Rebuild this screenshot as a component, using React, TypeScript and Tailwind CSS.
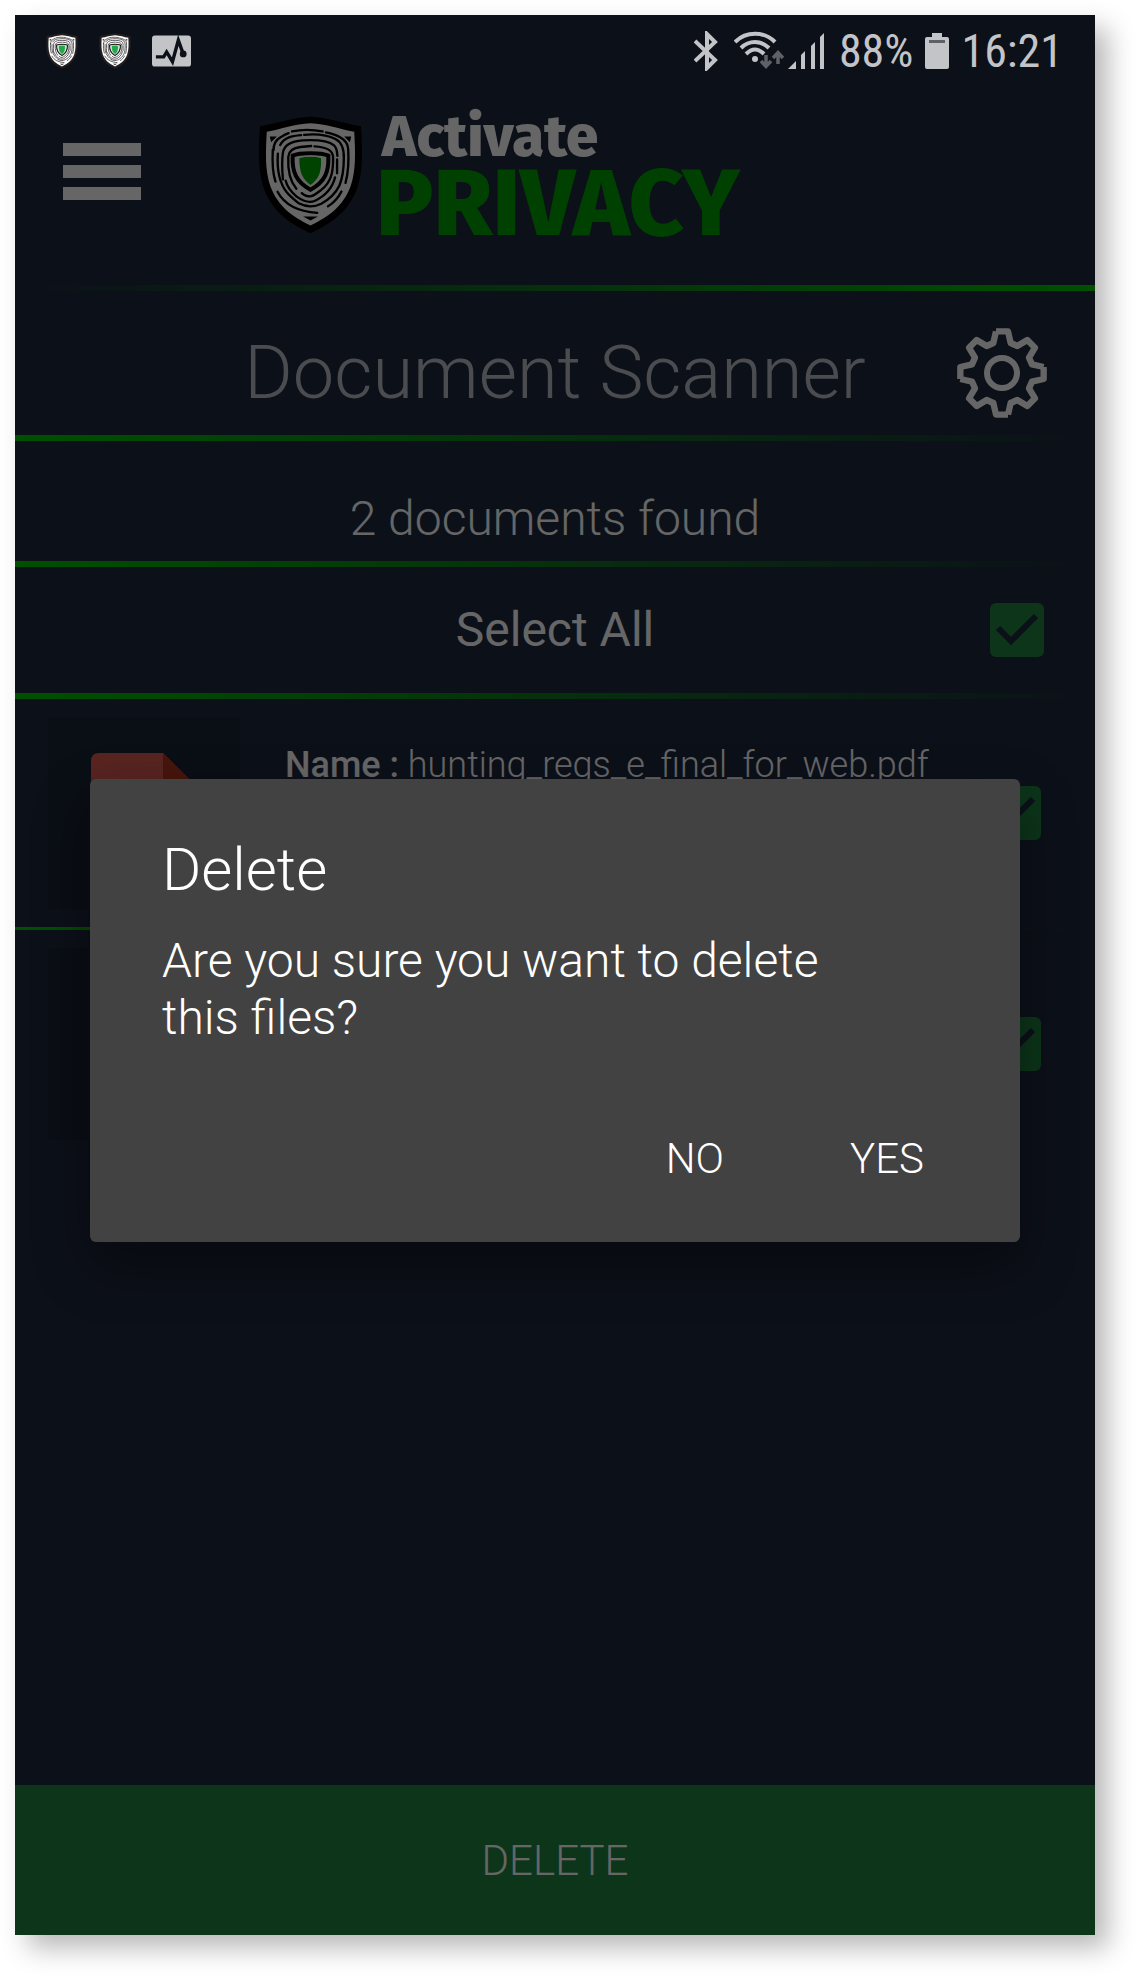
import type { ReactNode } from "react";

function Shield({ className, face, core, edge }: { className: string; face: string; core: string; edge: string }) {
  return (
    <svg className={className} viewBox="82 76 312 358" preserveAspectRatio="none" aria-hidden="true">
      <path
        fill={edge}
        d="M238 78C285 80 335 97 388 107C392 175 396 240 375 300C350 365 305 400 238 432C171 400 126 365 101 300C80 240 84 175 88 107C141 97 191 80 238 78Z"
      />
      <path
        fill={face}
        d="M238 98C285 100 325 116 368 124C371 185 374 240 357 290C334 350 295 380 238 408C181 380 142 350 119 290C102 240 105 185 108 124C151 116 191 100 238 98Z"
      />
      <g fill="none" stroke={edge} strokeWidth="7" strokeLinecap="round">
        <path d="M128 180C128 158 136 148 150 140C156 136 164 131 173 128M183 123C215 116 245 117 274 123M284 126C310 132 348 142 350 176C352 210 351 245 342 279" />
        <path d="M126 178C124 215 124 245 134 275M140 306C160 344 200 366 258 370M330 305C320 325 306 340 290 350" />
        <path d="M148 164C160 140 185 136 210 134M219 133C255 130 290 134 312 146C332 156 338 175 337 205C337 235 334 262 324 287C312 312 292 330 270 342C248 353 226 353 203 341M141 190C138 235 142 275 168 308C178 320 190 330 203 341" />
        <path d="M156 268C154 245 152 215 156 188C160 160 185 152 215 150C250 148 290 150 308 165C314 170 317 183 318 197M317 208V250M311 262C302 300 275 322 250 334C235 340 215 334 196 320C180 306 168 290 164 272" />
        <path d="M196 297C178 275 170 240 172 200C174 178 190 172 208 170L240 167M250 168C285 170 304 178 305 200C306 240 302 275 270 300C260 308 250 317 238 320C228 320 218 316 212 310" />
        <path strokeWidth="12" d="M238 189C262 189 282 192 291 196C293 245 282 275 238 300C194 275 183 245 185 196C194 192 214 189 238 189Z" />
      </g>
      <path fill={edge} d="M117 138L138 138L121 156ZM359 138L338 138L355 156ZM216 381H260L238 393Z" />
      <path
        fill={core}
        stroke={face}
        strokeWidth="4"
        d="M203 202C225 197 251 197 271 202C274 250 263 269 238 288C213 269 202 250 203 202Z"
      />
    </svg>
  );
}

function StatusBar() {
  return (
    <div className="flex h-[72px] items-center justify-between bg-[#0c1019] pr-8 pl-[31px] font-normal text-[#c3c4c8]">
      <div className="flex items-center gap-[21px]">
        <Shield className="h-9 w-8" face="#ffffff" core="#22a84a" edge="#231f20" />
        <Shield className="h-9 w-8" face="#ffffff" core="#22a84a" edge="#231f20" />
        <svg className="h-8 w-[39px]" viewBox="0 0 40 32" aria-hidden="true">
          <rect width="40" height="32" rx="3" fill="#c3c4c8" />
          <path d="M4 22H12L15 17L21 27L27 5L32 19" fill="none" stroke="#0c1019" strokeWidth="3.5" />
          <circle cx="32" cy="19" r="3.5" fill="#0c1019" />
        </svg>
      </div>
      <div className="flex items-center">
        <svg className="h-10 w-6" viewBox="0 0 24 40" fill="none" stroke="currentColor" strokeWidth="4" aria-hidden="true">
          <path d="M1 10L21 29L13 37V3L21 11L1 30" />
        </svg>
        <svg className="ml-4 h-10 w-[50px]" viewBox="0 0 50 40" fill="none" aria-hidden="true">
          <g stroke="currentColor" strokeWidth="4">
            <path d="M1 11C12 0 30 0 41 11" />
            <path d="M7 17C15 9 27 9 35 17" />
            <path d="M12 23C18 17 24 17 30 23" />
          </g>
          <circle cx="21" cy="28" r="3" fill="currentColor" />
          <path d="M32 24V35M27 30L32 35.500L37 30M44 33V22M39 27L44 21.500L49 27" stroke="#5f6168" strokeWidth="3.500" />
        </svg>
        <svg className="ml-1 h-9 w-9" viewBox="0 0 36 36" fill="currentColor" aria-hidden="true">
          <path d="M0 36L8 28V36ZM13 36V22L17 18V36ZM23 36V13L27 9V36ZM32 36V4L36 0V36Z" />
        </svg>
        <span className="ml-[15px] font-['Roboto_Condensed','Roboto',sans-serif] text-[46px] leading-none">88%</span>
        <svg className="ml-3 h-9 w-6" viewBox="0 0 24 36" aria-hidden="true">
          <path fill="currentColor" d="M7 0H17V4H22Q24 4 24 6V34Q24 36 22 36H2Q0 36 0 34V6Q0 4 2 4H7Z" />
          <path fill="#5f6168" d="M4 7H20V10H4Z" />
        </svg>
        <span className="ml-3 font-['Roboto_Condensed','Roboto',sans-serif] text-[46px] leading-none">16:21</span>
      </div>
    </div>
  );
}

function Gear() {
  const quarter = "M-18 -125L-26 -90L-46 -81L-76 -99L-99 -76L-81 -46L-90 -26L-125 -18V18";
  return (
    <svg className="size-[90px]" viewBox="-135 -135 270 270" fill="none" stroke="#ffffff" strokeWidth="19" strokeLinejoin="round" aria-hidden="true">
      <path d={quarter} />
      <path d={quarter} transform="rotate(90)" />
      <path d={quarter} transform="rotate(180)" />
      <path d={quarter} transform="rotate(270)" />
      <circle r="45" strokeWidth="18" />
    </svg>
  );
}

function CheckBox({ id, label }: { id: string; label?: string }) {
  return (
    <span className="relative size-[54px] shrink-0">
      <input
        id={id}
        type="checkbox"
        defaultChecked
        aria-label={label}
        className="block size-full appearance-none rounded-[6px] bg-[#1e8541]"
      />
      <svg className="pointer-events-none absolute inset-0 size-full" viewBox="0 0 54 54" fill="none" stroke="#1e283f" strokeWidth="6" aria-hidden="true">
        <path d="M8 25L21 38L46 13" />
      </svg>
    </span>
  );
}

function Rule() {
  return <div className="h-1.5 bg-linear-to-r from-[#00c800] to-transparent" />;
}

function DocumentRow({ id, label, children, icon }: { id: string; label: string; children?: ReactNode; icon?: ReactNode }) {
  return (
    <li className="group">
      <div className="flex h-[228px] items-center pr-[54px] pl-[33px]">
        <div className="grid size-48 shrink-0 place-items-center bg-[#1a2336]">{icon}</div>
        <div className="flex-1 self-start pt-11 pl-[45px]">{children}</div>
        <CheckBox id={id} label={label} />
      </div>
      <div className="h-[3px] bg-linear-to-r from-[#00c800] to-transparent group-last:hidden" />
    </li>
  );
}

function PdfIcon() {
  return (
    <svg className="h-[120px] w-[106px]" viewBox="0 0 106 120" aria-hidden="true">
      <path fill="#dd5a50" d="M8 0H72L106 34V112Q106 120 98 120H8Q0 120 0 112V8Q0 0 8 0Z" />
      <path fill="#b2361f" d="M72 0L106 34H72Z" />
    </svg>
  );
}

function DeleteDialog() {
  return (
    <div className="absolute inset-0 flex items-center bg-black/60 px-[75px] pb-0.5">
      <div
        role="dialog"
        aria-modal="true"
        aria-labelledby="dialog-title"
        className="w-full rounded-[6px] bg-[#424242] px-[72px] pt-[61px] pb-[54px] text-white shadow-[0_24px_54px_rgba(0,0,0,0.4)]"
      >
        <h2 id="dialog-title" className="text-[60px] leading-[60px]">Delete</h2>
        <p className="mt-8 max-w-[700px] text-[48px] leading-[57px]">Are you sure you want to delete this files?</p>
        <div className="mt-[84px] flex justify-end gap-[78px]">
          <button type="button" className="px-6 text-[42px] leading-[58px]">NO</button>
          <button type="button" className="px-6 text-[42px] leading-[58px]">YES</button>
        </div>
      </div>
    </div>
  );
}

export default function App() {
  return (
    <div className="flex min-h-screen bg-white pt-[15px] pr-[45px] pb-[45px] pl-[15px] font-['Roboto',sans-serif] font-light">
      <div className="flex flex-1 flex-col shadow-[13px_13px_25px_rgba(0,0,0,0.28)]">
        <StatusBar />
        <div className="relative flex flex-1 flex-col bg-[#1e283f] text-white">
          <header className="flex items-start pt-[26px] pb-10 pl-12">
            <button type="button" aria-label="Menu" className="mt-[30px] flex w-[78px] flex-col gap-[9px]">
              <span className="h-[13px] bg-white" />
              <span className="h-[13px] bg-white" />
              <span className="h-[13px] bg-white" />
            </button>
            <div className="ml-[117px] flex gap-[13px] font-['Fira_Sans','Noto_Sans',sans-serif] font-extrabold">
              <Shield className="mt-[3px] h-[118px] w-[105px]" face="#ffffff" core="#00a800" edge="#000000" />
              <div>
                <div className="pl-1.5 text-[58px] leading-[48px]">Activate</div>
                <div className="text-[95px] leading-[84px] text-[#00a000]">PRIVACY</div>
              </div>
            </div>
          </header>
          <div className="h-1.5 bg-linear-to-l from-[#00c800] to-transparent" />

          <div className="grid h-36 grid-cols-[1fr_auto_1fr] items-center px-12 pt-5">
            <h1 className="col-start-2 text-[74px] leading-none text-[#bcbec6]">Document Scanner</h1>
            <button type="button" aria-label="Settings" className="justify-self-end">
              <Gear />
            </button>
          </div>
          <Rule />

          <p className="flex h-[120px] items-center justify-center pt-9 text-[48px] leading-none">2 documents found</p>
          <Rule />

          <div className="grid h-[126px] grid-cols-[1fr_auto_1fr] items-center px-[51px]">
            <label htmlFor="select-all" className="col-start-2 text-[48px] leading-none font-normal">Select All</label>
            <span className="flex justify-end">
              <CheckBox id="select-all" />
            </span>
          </div>
          <Rule />

          <ul className="flex-1">
            <DocumentRow id="doc-1" label="hunting_regs_e_final_for_web.pdf" icon={<PdfIcon />}>
              <p className="text-[36px] leading-[44px] whitespace-nowrap">
                <span className="font-medium">Name :</span> hunting_regs_e_final_for_web.pdf
              </p>
            </DocumentRow>
            <DocumentRow id="doc-2" label="Second document" />
          </ul>

          <button type="button" className="h-[150px] bg-[#1e8541] text-[42px]">DELETE</button>
          <DeleteDialog />
        </div>
      </div>
    </div>
  );
}
